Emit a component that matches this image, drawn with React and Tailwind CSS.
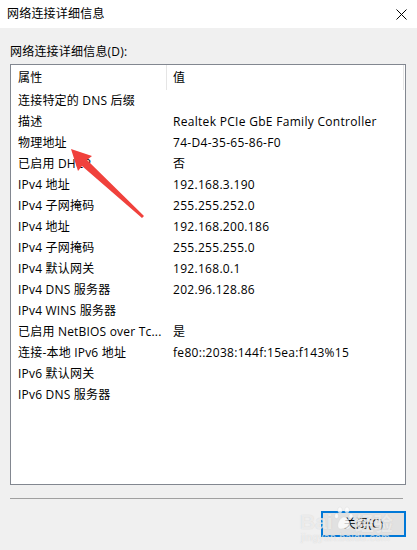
import React from "react";

const rows = [
  ["连接特定的 DNS 后缀", ""],
  ["描述", "Realtek PCIe GbE Family Controller"],
  ["物理地址", "74-D4-35-65-86-F0"],
  ["已启用 DHCP", "否"],
  ["IPv4 地址", "192.168.3.190"],
  ["IPv4 子网掩码", "255.255.252.0"],
  ["IPv4 地址", "192.168.200.186"],
  ["IPv4 子网掩码", "255.255.255.0"],
  ["IPv4 默认网关", "192.168.0.1"],
  ["IPv4 DNS 服务器", "202.96.128.86"],
  ["IPv4 WINS 服务器", ""],
  ["已启用 NetBIOS over Tc...", "是"],
  ["连接-本地 IPv6 地址", "fe80::2038:144f:15ea:f143%15"],
  ["IPv6 默认网关", ""],
  ["IPv6 DNS 服务器", ""],
];

export default function App() {
  return (
    <div
      className="relative w-[417px] h-[550px] bg-[#f0f0f0] text-[12px] text-black overflow-hidden tracking-[0.2px]"
      style={{ fontFamily: '"Open Sans", "Noto Sans CJK SC", sans-serif' }}
    >
      {/* Title bar */}
      <div className="h-[28px] bg-white flex items-center justify-between pl-[7px] pr-[9px]">
        <span className="leading-[16px]">网络连接详细信息</span>
        <svg width="11" height="11" viewBox="0 0 11 11" className="mr-[1px]">
          <path d="M0.5 0.5 L10.5 10.5 M10.5 0.5 L0.5 10.5" stroke="#000" strokeWidth="1" />
        </svg>
      </div>

      <div className="px-[10px] pt-[16px]">
        <div className="leading-[16px] h-[16px]">网络连接详细信息(D):</div>
        <div className="mt-[4px] h-[421px] w-[396px] border border-[#828790] bg-white">
          <div className="h-[25px] flex items-center">
            <div className="w-[156px] h-full pl-[7px] flex items-center border-r border-[#e5e5e5]">属性</div>
            <div className="flex-1 h-full pl-[6px] flex items-center border-r border-[#e5e5e5] mr-[1px]">值</div>
          </div>
          {rows.map(([k, v], i) => (
            <div key={i} className="h-[21px] flex items-center">
              <div className="w-[157px] pl-[7px] whitespace-nowrap">{k}</div>
              <div className="flex-1 pl-[5px] whitespace-nowrap tracking-[0.3px]">{v}</div>
            </div>
          ))}
        </div>
        <div className="mt-[13px] w-[393px] h-[1px] bg-[#a0a0a0]" />
        <div className="flex justify-end mt-[12px] pr-[1px]">
          <div className="w-[85px] h-[26px] border-2 border-[#0078d7] bg-[#e1e1e1] flex items-center justify-center leading-[16px]">
            关闭(C)
          </div>
        </div>
      </div>

      {/* Red arrow annotation */}
      <svg className="absolute left-0 top-0 pointer-events-none" width="417" height="550">
        <polygon
          points="71,149 92,156 87,160 144,216 142,218 82,166 78,171"
          fill="#f0413c"
        />
      </svg>

      {/* Watermark */}
      <div className="absolute left-[300px] top-[506px] pointer-events-none text-white/60 leading-none tracking-normal">
        <div className="flex items-end">
          <div
            className="text-[21px] font-bold"
            style={{ fontFamily: '"Liberation Sans", sans-serif', textShadow: "0 0 1px rgba(180,180,180,0.6)" }}
          >
            Bai
          </div>
          <svg width="20" height="26" viewBox="0 0 20 26" className="mx-[1px]">
            <g fill="rgba(255,255,255,0.75)" stroke="rgba(200,200,200,0.5)" strokeWidth="0.5">
              <ellipse cx="6" cy="4" rx="2.3" ry="3" />
              <ellipse cx="13" cy="4" rx="2.3" ry="3" />
              <ellipse cx="2.5" cy="10" rx="2" ry="2.6" />
              <ellipse cx="17" cy="10" rx="2" ry="2.6" />
              <path d="M10 11 C6 11 3 18 4 21 C5 24 8 22.5 10 22.5 C12 22.5 15 24 16 21 C17 18 14 11 10 11 Z" />
            </g>
          </svg>
          <div
            className="text-[19px] font-bold"
            style={{ fontFamily: '"Noto Sans CJK SC", sans-serif', textShadow: "0 0 1px rgba(180,180,180,0.6)" }}
          >
            经验
          </div>
        </div>
        <div
          className="text-[10px] mt-[1px] pl-[1px] tracking-[0.5px]"
          style={{ fontFamily: '"Liberation Sans", sans-serif', textShadow: "0 0 1px rgba(180,180,180,0.6)" }}
        >
          jingyan.baidu.com
        </div>
      </div>
    </div>
  );
}
